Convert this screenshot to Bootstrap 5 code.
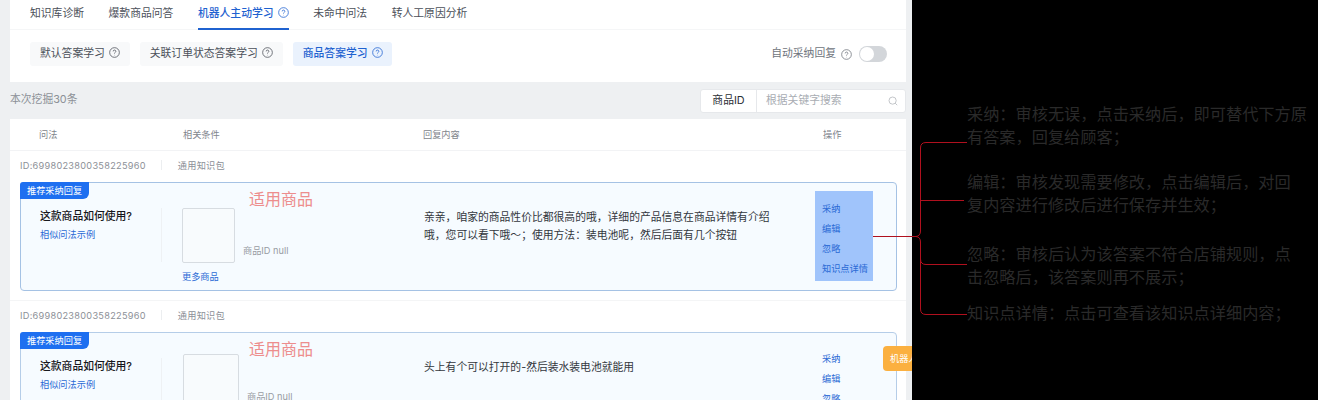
<!DOCTYPE html>
<html lang="zh-CN">
<head>
<meta charset="utf-8">
<title>机器人主动学习</title>
<link href="https://cdn.jsdelivr.net/npm/bootstrap@5.3.0/dist/css/bootstrap.min.css" rel="stylesheet">
<style>
html,body{margin:0;background:#000;overflow:hidden}
body{font-family:"Inter","Noto Sans CJK SC",sans-serif;font-size:10.8px;color:#2b2f36}
.shot{width:1318px;height:400px;position:relative;overflow:hidden;background:#000}
.pane{width:912px;height:400px;flex:none;background:#eef0f2;padding:0 6px 0 10px;position:relative;overflow:hidden}
.panel-top{height:82px;background:#fff}
.tabrow{height:30px;gap:24.6px;padding-left:20px;border-bottom:1px solid #f5f6f7}
.tabitem{height:30px;line-height:28px;color:#4b5059;position:relative;white-space:nowrap}
.tabitem.on{color:#1f62d0;font-weight:500;border-bottom:2px solid #1f62d0}
.helpic{width:11px;height:11px;margin-left:4px;vertical-align:-1px}
.subrow{padding:12px 19px 0 20px}
.subitem{height:24px;line-height:24px;padding:0 10px;background:#f8f9fa;border-radius:3px;color:#4b5059;margin-right:10px;white-space:nowrap}
.subitem.on{background:#eaf2fd;color:#1f62d0;font-weight:500;padding-right:9px}
.switchbar{width:28px;height:16px;border-radius:8px;background:#d3d6da;position:relative;margin-left:7px}
.switchbar::before{content:"";position:absolute;left:1px;top:1px;width:14px;height:14px;border-radius:50%;background:#fff}
.autolab{color:#6f747c}
.autolab .helpic{margin-left:5px}
.minebar{height:37px;color:#8c9097}
.searchbox{width:206px;height:24px;background:#fff;border:1px solid #e6e8eb;border-radius:3px}
.searchkey{width:56px;line-height:22px;text-align:center;color:#2b2f36;border-right:1px solid #e6e8eb}
.searchin{padding-left:9px;color:#a9adb3;flex:1;line-height:22px}
.searchic{width:10px;height:10px;margin:6px 7px 0 0}
.listwrap{background:#fff;height:281px;overflow:hidden}
.headrow{height:32px;line-height:32px;border-bottom:1px solid #f2f3f5;font-size:9.2px;color:#81858c;position:relative}
.hcol1{width:173px;padding-left:29px}
.hcol2{width:240px}
.hcol3{width:400px}
.idrow{height:31px;line-height:30px;font-size:9.2px;color:#8c9097;padding-left:10px;letter-spacing:.27px}
.idrow i{display:inline-block;width:1px;height:10px;background:#eceef0;margin:0 15.500px;vertical-align:-1px}
.qacard{margin-left:10px;width:877px;background:#f6fbff;border:1px solid #a5c2e4;border-radius:4px;position:relative}
.qacard.one{height:109px}
.qacard.two{height:120px;border-color:#b5cde8}
.tagmark{position:absolute;left:-1px;top:-1px;height:17px;line-height:17px;padding:0 7px;background:#1e6ff0;color:#fff;font-size:9.2px;border-radius:3px 0 6px 0;white-space:nowrap}
.redhint{position:absolute;left:228px;top:5px;font-size:16px;line-height:22px;color:#ed8d8d;white-space:nowrap}
.qcol{width:141px;padding:26px 0 0 19px;flex:none;position:relative}
.qcol::after{content:"";position:absolute;right:0;top:25px;bottom:28px;width:1px;background:#eef1f4}
.qtitle{font-weight:500;color:#16181c;line-height:16px;font-size:10.8px}
.linkish{color:#2a6ad5;font-size:9.2px;line-height:13px;margin-top:3px}
.morelink{color:#2a6ad5;font-size:9.2px;line-height:13px;margin-top:7px}
.gcol{width:262px;flex:none;padding:25px 0 0 20px}
.thumb{width:53px;height:55px;background:#f8fbfd;border:1px solid #d7dce1;border-radius:2px;flex:none}
.two .thumb{width:56px;height:70px;margin-top:-4px;margin-left:1px}
.gid{font-size:9.2px;color:#989ca3;margin-left:8px;line-height:12px;margin-bottom:6px;white-space:nowrap}
.two .gid{align-self:flex-start;margin:33px 0 0 8px}
.rcol{width:350px;flex:none;padding-top:26px;color:#33373d;line-height:17.500px;font-size:10.8px}
.acol{margin-left:41px;width:58px;height:90px;margin-top:8px;padding:8px 7px 0;flex:none;color:#2a6ad5;font-size:9.2px;line-height:20px;white-space:nowrap}
.acol.hi{background:#a0c4fb}
.two .acol{margin-top:16px;padding-top:0}
.cardsep{height:10px;border-bottom:1px solid #f4f5f6}
.floatbadge{position:absolute;left:883px;top:346px;width:40px;height:25px;line-height:25px;padding-left:7px;background:#fbb040;color:#fff;font-size:9.2px;border-radius:4px;white-space:nowrap;overflow:hidden}
.darkside{flex:1;padding:102px 0 0 55px;font-family:"Noto Sans CJK SC","Inter",sans-serif}
.note{font-size:16.2px;line-height:22.5px;color:#2a2a2a;margin:0;white-space:nowrap}
.note.b{margin-top:23px}
.note.c{margin-top:27px}
.note.d{margin-top:14px}
.wires{position:absolute;left:0;top:0;pointer-events:none}
</style>
</head>
<body>
<div class="shot d-flex">
  <div class="pane">
    <div class="panel-top">
      <div class="tabrow d-flex">
        <div class="tabitem">知识库诊断</div>
        <div class="tabitem">爆款商品问答</div>
        <div class="tabitem on">机器人主动学习<svg class="helpic" viewBox="0 0 10 10"><circle cx="5" cy="5" r="4.4" fill="none" stroke="currentColor" stroke-width=".7"/><path d="M3.8 4a1.2 1.2 0 1 1 1.8 1c-.4.3-.6.5-.6.9M5 7.2v.3" fill="none" stroke="currentColor" stroke-width=".7"/></svg></div>
        <div class="tabitem">未命中问法</div>
        <div class="tabitem">转人工原因分析</div>
      </div>
      <div class="subrow d-flex align-items-center">
        <div class="subitem">默认答案学习<svg class="helpic" viewBox="0 0 10 10"><circle cx="5" cy="5" r="4.4" fill="none" stroke="currentColor" stroke-width=".7"/><path d="M3.8 4a1.2 1.2 0 1 1 1.8 1c-.4.3-.6.5-.6.9M5 7.2v.3" fill="none" stroke="currentColor" stroke-width=".7"/></svg></div>
        <div class="subitem">关联订单状态答案学习<svg class="helpic" viewBox="0 0 10 10"><circle cx="5" cy="5" r="4.4" fill="none" stroke="currentColor" stroke-width=".7"/><path d="M3.8 4a1.2 1.2 0 1 1 1.8 1c-.4.3-.6.5-.6.9M5 7.2v.3" fill="none" stroke="currentColor" stroke-width=".7"/></svg></div>
        <div class="subitem on">商品答案学习<svg class="helpic" viewBox="0 0 10 10"><circle cx="5" cy="5" r="4.4" fill="none" stroke="currentColor" stroke-width=".7"/><path d="M3.8 4a1.2 1.2 0 1 1 1.8 1c-.4.3-.6.5-.6.9M5 7.2v.3" fill="none" stroke="currentColor" stroke-width=".7"/></svg></div>
        <div class="ms-auto d-flex align-items-center autolab">自动采纳回复<svg class="helpic" viewBox="0 0 10 10"><circle cx="5" cy="5" r="4.4" fill="none" stroke="currentColor" stroke-width=".7"/><path d="M3.8 4a1.2 1.2 0 1 1 1.8 1c-.4.3-.6.5-.6.9M5 7.2v.3" fill="none" stroke="currentColor" stroke-width=".7"/></svg><span class="switchbar"></span></div>
      </div>
    </div>
    <div class="minebar d-flex align-items-center justify-content-between">
      <span>本次挖掘30条</span>
      <div class="searchbox d-flex">
        <div class="searchkey">商品ID</div>
        <div class="searchin">根据关键字搜索</div>
        <svg class="searchic" viewBox="0 0 10 10"><circle cx="4.6" cy="4.6" r="3.6" fill="none" stroke="#b4b7bc" stroke-width=".8"/><path d="M7.2 7.2l2 2" stroke="#b4b7bc" stroke-width=".8"/></svg>
      </div>
    </div>
    <div class="listwrap">
      <div class="headrow d-flex">
        <div class="hcol1">问法</div><div class="hcol2">相关条件</div><div class="hcol3">回复内容</div><div>操作</div>
      </div>
      <div class="idrow">ID:6998023800358225960<i></i>通用知识包</div>
      <div class="qacard one d-flex">
        <div class="tagmark">推荐采纳回复</div>
        <div class="redhint">适用商品</div>
        <div class="qcol"><div class="qtitle">这款商品如何使用?</div><div class="linkish">相似问法示例</div></div>
        <div class="gcol">
          <div class="d-flex align-items-end"><div class="thumb"></div><div class="gid">商品ID null</div></div>
          <div class="morelink">更多商品</div>
        </div>
        <div class="rcol">亲亲，咱家的商品性价比都很高的哦，详细的产品信息在商品详情有介绍哦，您可以看下哦～；使用方法：装电池呢，然后后面有几个按钮</div>
        <div class="acol hi"><div>采纳</div><div>编辑</div><div>忽略</div><div>知识点详情</div></div>
      </div>
      <div class="cardsep"></div>
      <div class="idrow">ID:6998023800358225960<i></i>通用知识包</div>
      <div class="qacard two d-flex">
        <div class="tagmark">推荐采纳回复</div>
        <div class="redhint">适用商品</div>
        <div class="qcol"><div class="qtitle">这款商品如何使用?</div><div class="linkish">相似问法示例</div></div>
        <div class="gcol">
          <div class="d-flex"><div class="thumb"></div><div class="gid">商品ID null</div></div>
        </div>
        <div class="rcol">头上有个可以打开的-然后装水装电池就能用</div>
        <div class="acol"><div>采纳</div><div>编辑</div><div>忽略</div></div>
      </div>
    </div>
    <div class="floatbadge">机器人</div>
  </div>
  <div class="darkside">
    <p class="note">采纳：审核无误，点击采纳后，即可替代下方原<br>有答案，回复给顾客；</p>
    <p class="note b">编辑：审核发现需要修改，点击编辑后，对回<br>复内容进行修改后进行保存并生效；</p>
    <p class="note c">忽略：审核后认为该答案不符合店铺规则，点<br>击忽略后，该答案则再不展示；</p>
    <p class="note d">知识点详情：点击可查看该知识点详细内容；</p>
  </div>
  <svg class="wires" width="1318" height="400" viewBox="0 0 1318 400"><path d="M873 236.500H916Q920.500 236 920.500 231V148Q920.500 142.500 926 142.500H967M920.500 200.500H964M916 236.500Q920.500 237 920.500 242V259Q920.500 264.500 926 264.500H967M920.500 259V309Q920.500 314.500 926 314.500H967" fill="none" stroke="#b0101e" stroke-width="1"/></svg>
</div>
</body>
</html>
